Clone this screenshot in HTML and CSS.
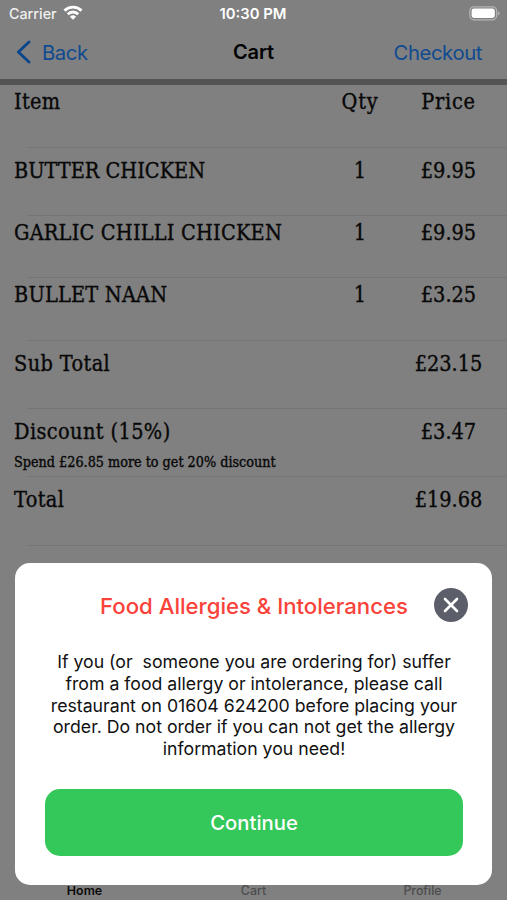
FILE: index.html
```
<!DOCTYPE html>
<html lang="en">
<head>
<meta charset="utf-8">
<title>Cart</title>
<link rel="stylesheet" href="styles.css">
</head>
<body>
<div class="phone">
  <div class="status">
    <div class="carrier">Carrier
      <svg class="wifi" width="20" height="15" viewBox="0 0 20 15" fill="none" stroke="#fff" stroke-width="2.9">
        <path d="M1.5 5.6a12.2 12.2 0 0 1 17 0"/>
        <path d="M4.8 9.2a7.4 7.4 0 0 1 10.4 0"/>
        <path d="M10 14.8 6.9 11.7a4.5 4.5 0 0 1 6.2 0Z" fill="#fff" stroke="none"/>
      </svg>
    </div>
    <div class="time">10:30 PM</div>
    <div class="power">
      <svg width="31" height="15" viewBox="0 0 31 15">
        <rect x="0.8" y="0.8" width="26.8" height="13" rx="4" fill="none" stroke="#b4b4b4" stroke-width="1.2"/>
        <rect x="2.6" y="2.6" width="23.2" height="9.4" rx="2.4" fill="#fff"/>
        <path d="M28.9 5.2q1.6.6 1.6 2.1t-1.6 2.1Z" fill="#b4b4b4"/>
      </svg>
    </div>
  </div>
  <nav class="nav">
    <a class="back">
      <svg width="15" height="24" viewBox="0 0 15 24" fill="none" stroke="#0a468c" stroke-width="2.9" stroke-linecap="round" stroke-linejoin="round"><path d="M13 2 2.4 12 13 22"/></svg>
      <span>Back</span>
    </a>
    <h1 class="title">Cart</h1>
    <a class="checkout">Checkout</a>
  </nav>
  <div class="rule"></div>
  <main class="list">
    <div class="row head"><span class="item">Item</span><span class="qty wide">Qty</span><span class="price wide">Price</span></div>
    <div class="row tall"><span>BUTTER CHICKEN</span><span class="qty">1</span><span class="price">£9.95</span></div>
    <div class="row short"><span class="long">GARLIC CHILLI CHICKEN</span><span class="qty">1</span><span class="price">£9.95</span></div>
    <div class="row mid"><span class="long">BULLET NAAN</span><span class="qty">1</span><span class="price">£3.25</span></div>
    <div class="row tall"><span class="label">Sub Total</span><span></span><span class="price">£23.15</span></div>
    <div class="row tall"><div><span class="label">Discount (15%)</span><p class="note">Spend £26.85 more to get 20% discount</p></div><span></span><span class="price">£3.47</span></div>
    <div class="row tall last"><span class="label">Total</span><span></span><span class="price">£19.68</span></div>
  </main>
  <footer class="tabs"><span class="active">Home</span><span>Cart</span><span>Profile</span></footer>
  <section class="modal">
    <header class="modal-head">
      <h2>Food Allergies &amp; Intolerances</h2>
      <button class="close" aria-label="Close"><svg width="16" height="16" viewBox="0 0 16 16" stroke="#fff" stroke-width="2.6" stroke-linecap="round"><path d="M2 2 14 14M14 2 2 14"/></svg></button>
    </header>
    <p class="message">If you (or&nbsp; someone you are ordering for) suffer<br>from a food allergy or intolerance, please call<br>restaurant on 01604 624200 before placing your<br>order. Do not order if you can not get the allergy<br>information you need!</p>
    <button class="continue">Continue</button>
  </section>
</div>
</body>
</html>
```
FILE: styles.css
```
* { box-sizing: border-box; }
body { margin: 0; font-family: Inter, "Liberation Sans", sans-serif; }
h1, h2, p { margin: 0; }
button { border: 0; padding: 0; font-family: inherit; }

.phone {
  position: relative;
  width: 507px;
  height: 900px;
  overflow: hidden;
  background: #808080;
  display: flex;
  flex-direction: column;
}

.status {
  height: 26px;
  flex: none;
  display: grid;
  grid-template-columns: 1fr 1fr 1fr;
  align-items: center;
  padding: 1px 7px 0 9px;
  color: #fff;
}
.carrier { display: flex; align-items: center; gap: 6px; font-size: 14.3px; font-weight: 500; color: #f0f0f0; }
.wifi { margin-top: -2px; }
.time { margin-left: -3px; text-align: center; font-size: 14.8px; font-weight: 600; }
.power { display: flex; justify-content: flex-end; }

.nav {
  height: 53px;
  flex: none;
  display: grid;
  grid-template-columns: 1fr 1fr 1fr;
  align-items: center;
  padding: 0 25px 1px 16px;
  color: #0f4a90;
  font-size: 20.3px;
  letter-spacing: -0.4px;
}
.back { display: flex; align-items: center; gap: 11px; }
.title { margin-left: 9px; text-align: center; font-size: 20px; font-weight: 600; color: #000; letter-spacing: -0.1px; }
.checkout { text-align: right; }

.rule { height: 6px; flex: none; background: #545454; }

.list {
  flex: 1;
  font-family: "DejaVu Serif Condensed", "DejaVu Serif", serif;
  font-stretch: condensed;
  font-size: 21.5px;
  line-height: 30px;
  color: #080808;
  -webkit-text-stroke: 0.35px #080808;
}
.row {
  display: grid;
  grid-template-columns: 316px 60px 117px;
  align-items: start;
  padding-left: 14px;
  background: linear-gradient(#757575, #757575) 27px 100% / 100% 1px no-repeat;
}
.head { height: 63px; padding-top: 2px; }
.tall { height: 68px; padding-top: 8px; }
.short { height: 62px; padding-top: 2px; }
.mid { height: 63px; padding-top: 2px; }
.last { height: 69px; }
.item { letter-spacing: 0.3px; }
.qty, .price { text-align: center; }
.wide { letter-spacing: 0.8px; }
.long { letter-spacing: 0.2px; }
.label { letter-spacing: 0.4px; }
.note { font-size: 14.25px; line-height: 20px; margin-top: 5px; }

.tabs {
  height: 18px;
  flex: none;
  display: grid;
  grid-template-columns: 1fr 1fr 1fr;
  text-align: center;
  font-size: 12.4px;
  font-weight: 500;
  line-height: 18px;
  color: #4d4d4d;
}
.tabs .active { font-weight: 600; color: #0a0a0a; }

.modal {
  position: absolute;
  left: 15px;
  top: 563px;
  width: 477px;
  height: 322px;
  border-radius: 15px;
  background: #fff;
  padding: 25px 29px 29px 30px;
  display: flex;
  flex-direction: column;
}
.modal-head {
  display: grid;
  grid-template-columns: 1fr 34px;
  align-items: center;
  margin-right: -5px;
}
h2 { padding: 1px 0 0 29px; text-align: center; font-size: 22.15px; line-height: 30px; font-weight: 500; color: #f9423a; white-space: nowrap; }
.close {
  width: 34px;
  height: 34px;
  border-radius: 50%;
  background: #5c5e69;
  display: flex;
  align-items: center;
  justify-content: center;
}
.message { margin: 29px -10px 0; text-align: center; font-size: 17.7px; line-height: 21.75px; color: #111; white-space: nowrap; }
.continue {
  margin-top: auto;
  height: 67px;
  border-radius: 15px;
  background: #34c759;
  color: #fff;
  font-size: 20.3px;
  font-weight: 500;
}
```
